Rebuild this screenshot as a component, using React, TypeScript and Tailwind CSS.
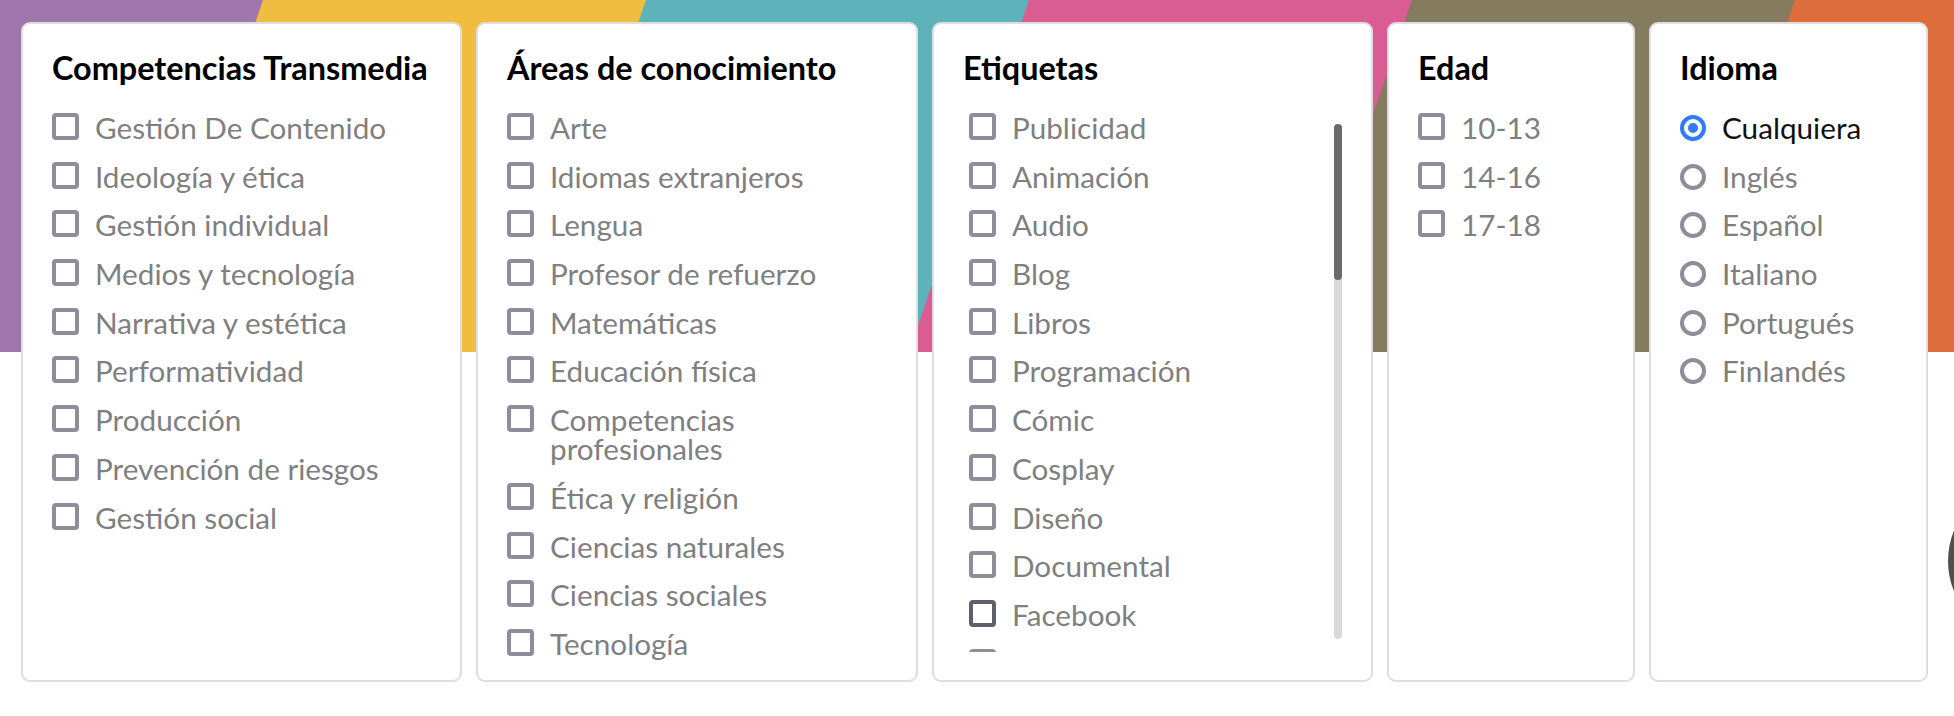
import React from 'react';

// franjas de colores del fondo (borde superior izquierdo de cada una)
const stripes = [
  { x: -120, color: '#9f77ad' },
  { x: 263, color: '#f0bd41' },
  { x: 646, color: '#5eb3bb' },
  { x: 1029, color: '#d95c93' },
  { x: 1412, color: '#857c60' },
  { x: 1795, color: '#dd6d3a' },
];

const competencias = [
  'Gestión De Contenido',
  'Ideología y ética',
  'Gestión individual',
  'Medios y tecnología',
  'Narrativa y estética',
  'Performatividad',
  'Producción',
  'Prevención de riesgos',
  'Gestión social',
];

const areas = [
  'Arte',
  'Idiomas extranjeros',
  'Lengua',
  'Profesor de refuerzo',
  'Matemáticas',
  'Educación física',
  'Competencias profesionales',
  'Ética y religión',
  'Ciencias naturales',
  'Ciencias sociales',
  'Tecnología',
];

const etiquetas = [
  'Publicidad', 'Animación', 'Audio', 'Blog', 'Libros', 'Programación', 'Cómic', 'Cosplay',
  'Diseño', 'Documental', 'Facebook', 'Fan fiction', 'Películas', 'Fotografía', 'Juegos',
  'Instagram', 'Memes', 'Música', 'Noticias', 'Podcast', 'Radio', 'Redes sociales', 'Series',
  'Teatro', 'Televisión', 'Twitter', 'Videojuegos', 'Wiki', 'YouTube', 'Vlog', 'WhatsApp',
  'Snapchat', 'Spotify', 'Tumblr', 'Machinima', 'Fotonovela',
];

const edades = ['10-13', '14-16', '17-18'];

const idiomas = ['Cualquiera', 'Inglés', 'Español', 'Italiano', 'Portugués', 'Finlandés'];

const Banner = () => (
  <svg className="absolute left-0 top-0" width={1954} height={352} viewBox="0 0 1954 352">
    {stripes.map((s) => (
      <polygon
        key={s.color}
        points={`${s.x},0 ${s.x + 384},0 ${s.x + 264},352 ${s.x - 120},352`}
        fill={s.color}
      />
    ))}
  </svg>
);

const Checkbox = ({ dark }: { dark?: boolean }) => (
  <span
    className={`h-[27px] w-[27px] shrink-0 rounded-[4px] border-4 bg-white ${
      dark ? 'border-[#5f5e6b]' : 'border-[#8e8d99]'
    }`}
  />
);

const CheckItem = ({ label, dark }: { label: string; dark?: boolean }) => (
  <label className="flex items-start gap-4">
    <Checkbox dark={dark} />
    <span className="text-[29.7px] leading-[29px] text-[#7f7f7f]">{label}</span>
  </label>
);

const RadioItem = ({ label, checked }: { label: string; checked?: boolean }) => (
  <label className="flex items-start gap-4">
    {checked ? (
      <span className="mt-[2px] flex h-[26px] w-[26px] shrink-0 items-center justify-center rounded-full border-4 border-[#2f7cf6]">
        <span className="h-[10px] w-[10px] rounded-full bg-[#2f7cf6]" />
      </span>
    ) : (
      <span className="mt-[2px] h-[26px] w-[26px] shrink-0 rounded-full border-4 border-[#8e8d99]" />
    )}
    <span className={`text-[29.7px] leading-[29px] ${checked ? 'text-[#111111]' : 'text-[#7f7f7f]'}`}>{label}</span>
  </label>
);

const Card = ({ title, width, children }: { title: string; width: string; children: React.ReactNode }) => (
  <div className={`${width} h-[660px] shrink-0 rounded-[9px] border-2 border-[#dedede] bg-white px-[29px] pt-[26px]`}>
    <h3 className="text-[32.4px] font-bold leading-[36px] text-black">{title}</h3>
    <div className="mt-[27px]">{children}</div>
  </div>
);

export default function App() {
  return (
    <div className="relative h-[716px] w-full overflow-hidden bg-white" style={{ fontFamily: 'Lato, "Open Sans", sans-serif' }}>
      <Banner />

      <div className="relative flex gap-[14px] pl-[21px] pt-[22px]">
        <Card title="Competencias Transmedia" width="w-[441px]">
          <div className="flex flex-col gap-[19.7px]">
            {competencias.map((c) => (
              <CheckItem key={c} label={c} />
            ))}
          </div>
        </Card>

        <Card title="Áreas de conocimiento" width="w-[442px]">
          <div className="flex flex-col gap-[19.7px]">
            {areas.map((a) => (
              <CheckItem key={a} label={a} />
            ))}
          </div>
        </Card>

        <Card title="Etiquetas" width="w-[441px]">
          <div className="-mt-[1px] flex h-[540px]">
            <div className="flex-1 overflow-hidden pl-[6px] pt-[1px]">
              <div className="flex flex-col gap-[19.7px]">
                {etiquetas.map((e) => (
                  <CheckItem key={e} label={e} dark={e === 'Facebook'} />
                ))}
              </div>
            </div>
            {/* barra de desplazamiento */}
            <div className="w-2 shrink-0 pb-[13px] pt-[12px]">
              <div className="h-full rounded-full bg-[#d9d9d9]">
                <div className="h-[156px] rounded-full bg-[#6b6b6b]" />
              </div>
            </div>
          </div>
        </Card>

        <Card title="Edad" width="w-[248px]">
          <div className="flex flex-col gap-[19.7px]">
            {edades.map((e) => (
              <CheckItem key={e} label={e} />
            ))}
          </div>
        </Card>

        <Card title="Idioma" width="w-[279px]">
          <div className="flex flex-col gap-[19.7px]">
            {idiomas.map((i, idx) => (
              <RadioItem key={i} label={i} checked={idx === 0} />
            ))}
          </div>
        </Card>
      </div>

      {/* botón flotante cortado en el borde derecho */}
      <div className="absolute left-[1948px] top-[481px] h-[160px] w-[160px] rounded-full bg-[#4f4f4f]" />
    </div>
  );
}
